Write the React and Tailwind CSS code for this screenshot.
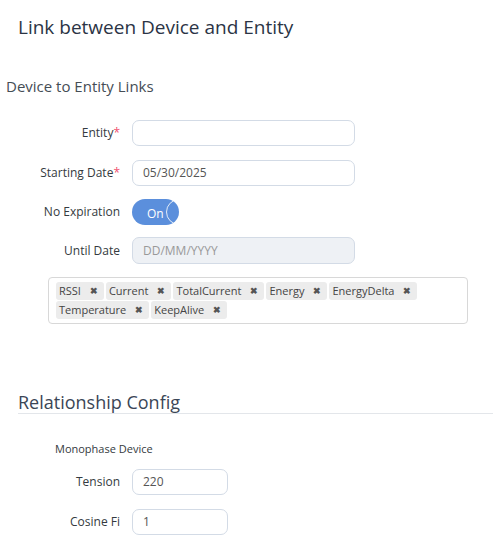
import React from "react";

const font = { fontFamily: '"Open Sans", "Noto Sans", sans-serif' };

function Label({ children, required }) {
  return (
    <div className="w-[120px] text-right text-[12px] text-[#343a40] shrink-0">
      {children}
      {required && <span className="text-[#f0506e]">*</span>}
    </div>
  );
}

function Tag({ text }) {
  return (
    <span className="inline-flex items-center h-[18px] bg-[#ececec] rounded-[3px] pl-[3px] pr-[6px] text-[11px] text-[#444] mr-[2px] mt-[1px]">
      {text}
      <span className="ml-[9px] text-[9px] font-bold text-[#555]">✖</span>
    </span>
  );
}

export default function App() {
  return (
    <div className="w-[493px] h-[547px] bg-white overflow-hidden" style={font}>
      <div className="pl-[18px] pt-[14px] text-[19px] font-medium text-[#2b3445] leading-[26px]">
        Link between Device and Entity
      </div>
      <div className="pl-[6px] mt-[36px] text-[15px] text-[#454d55] leading-[20px]">
        Device to Entity Links
      </div>

      <div className="mt-[24px] flex flex-col">
        <div className="flex items-center h-[26px]">
          <Label required>Entity</Label>
          <div className="ml-[12px] w-[223px] h-[26px] border border-[#d3dbe6] rounded-[7px]" />
        </div>
        <div className="flex items-center h-[26px] mt-[14px]">
          <Label required>Starting Date</Label>
          <div className="ml-[12px] w-[223px] h-[26px] border border-[#d3dbe6] rounded-[7px] flex items-center pl-[10px] text-[12px] text-[#555]">
            05/30/2025
          </div>
        </div>
        <div className="flex items-center h-[26px] mt-[13px]">
          <Label>No Expiration</Label>
          <div className="ml-[12px] w-[47px] h-[26px] rounded-full bg-[#5b8fdc] flex items-center relative overflow-hidden">
            <span className="ml-[15px] mt-[3px] text-[12px] text-white">On</span>
            <span className="absolute left-[34px] top-0 w-[26px] h-[26px] rounded-full border border-[#e3ecf8]" />
          </div>
        </div>
        <div className="flex items-center h-[27px] mt-[12px]">
          <Label>Until Date</Label>
          <div className="ml-[12px] w-[223px] h-[27px] border border-[#d3dbe6] bg-[#eef1f5] rounded-[7px] flex items-center pl-[10px] text-[12px] text-[#999]">
            DD/MM/YYYY
          </div>
        </div>
      </div>

      <div className="ml-[48px] mt-[13px] w-[420px] h-[47px] border border-[#d8d8d8] rounded-[4px] pl-[7px] pt-[3px] flex flex-wrap content-start">
        {["RSSI", "Current", "TotalCurrent", "Energy", "EnergyDelta", "Temperature", "KeepAlive"].map((t) => (
          <Tag key={t} text={t} />
        ))}
      </div>

      <div className="ml-[18px] mt-[67px] text-[18px] text-[#3b4656] leading-[22px] border-b border-[#e3e6ea]">
        Relationship Config
      </div>

      <div className="pl-[55px] mt-[27px] text-[11px] text-[#343a40] leading-[16px]">Monophase Device</div>

      <div className="mt-[12px] flex flex-col">
        <div className="flex items-center h-[26px]">
          <Label>Tension</Label>
          <div className="ml-[12px] w-[96px] h-[26px] border border-[#d3dbe6] rounded-[7px] flex items-center pl-[10px] text-[12px] text-[#555]">
            220
          </div>
        </div>
        <div className="flex items-center h-[26px] mt-[14px]">
          <Label>Cosine Fi</Label>
          <div className="ml-[12px] w-[96px] h-[26px] border border-[#d3dbe6] rounded-[7px] flex items-center pl-[10px] text-[12px] text-[#555]">
            1
          </div>
        </div>
      </div>
    </div>
  );
}
